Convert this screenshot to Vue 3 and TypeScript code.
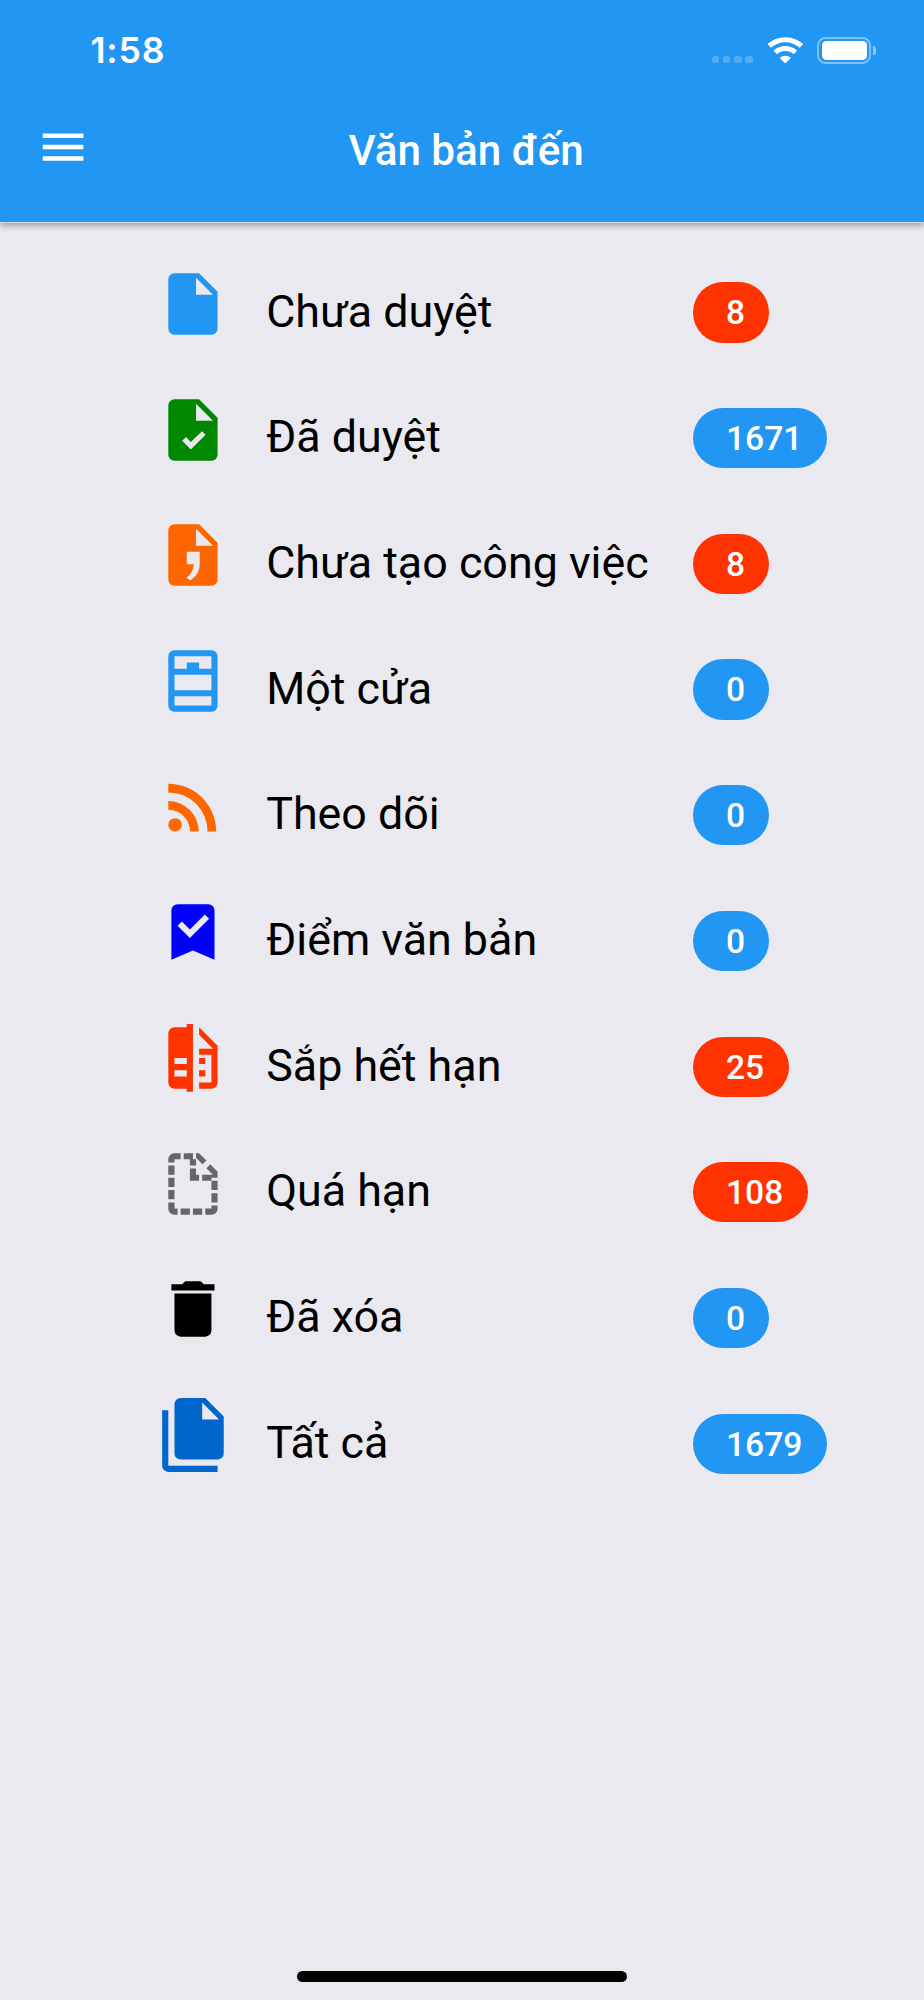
<script setup lang="ts">
interface Folder {
  label: string
  count: number
  tone: 'info' | 'alert'
  color: string
  icon: string
}

const folders: Folder[] = [
  {
    label: 'Chưa duyệt', count: 8, tone: 'alert', color: '#2196f3',
    icon: 'M13 9V3.5L18.5 9M6 2a2 2 0 0 0-2 2v16a2 2 0 0 0 2 2h12a2 2 0 0 0 2-2V8l-6-6H6z',
  },
  {
    label: 'Đã duyệt', count: 1671, tone: 'info', color: '#008800',
    icon: 'M14 2H6a2 2 0 0 0-2 2v16a2 2 0 0 0 2 2h12a2 2 0 0 0 2-2V8l-6-6M11.3 18.35l-2.8-2.8 1.25-1.25 1.55 1.6 3.65-3.5 1.15 1.15-4.8 4.8M13 9V3.5L18.5 9H13z',
  },
  {
    label: 'Chưa tạo công việc', count: 8, tone: 'alert', color: '#ff6600',
    icon: 'M14 2H6a2 2 0 0 0-2 2v16a2 2 0 0 0 2 2h12a2 2 0 0 0 2-2V8l-6-6M10 11h4.2v3.8c0 2.5-1.1 4.4-3.1 5.4l-1.2-.8c1.4-1 2.2-2.4 2.4-4.4H10v-4M13 9V3.5L18.5 9H13z',
  },
  {
    label: 'Một cửa', count: 0, tone: 'info', color: '#2196f3',
    icon: 'M6 2a2 2 0 0 0-2 2v16a2 2 0 0 0 2 2h12a2 2 0 0 0 2-2V4a2 2 0 0 0-2-2H6m0 2h12v4h-4V6h-4v2H6V4m0 6h12v5H6v-5m0 7h12v3H6v-3z',
  },
  {
    label: 'Theo dõi', count: 0, tone: 'info', color: '#ff6600',
    icon: 'M6.18 15.64a2.18 2.18 0 0 1 2.18 2.18C8.36 19 7.38 20 6.18 20C5 20 4 19 4 17.82a2.18 2.18 0 0 1 2.18-2.18M4 4.44A15.56 15.56 0 0 1 19.56 20h-2.83A12.73 12.73 0 0 0 4 7.27V4.44m0 5.66a9.9 9.9 0 0 1 9.9 9.9h-2.83A7.07 7.07 0 0 0 4 12.93V10.1z',
  },
  {
    label: 'Điểm văn bản', count: 0, tone: 'info', color: '#0000ff',
    icon: 'M17 3a2 2 0 0 1 2 2v16l-7-3-7 3V5a2 2 0 0 1 2-2h10m-6 11l6.25-6.25-1.41-1.41L11 11.17 8.41 8.59 7 10l4 4z',
  },
  {
    label: 'Sắp hết hạn', count: 25, tone: 'alert', color: '#ff3300',
    icon: 'M10 1v1H6a2 2 0 0 0-2 2v16a2 2 0 0 0 2 2h4v1h2V1h-2m4 1v2.5L18.5 9H14v2h4v9h-4v2h4a2 2 0 0 0 2-2V8l-6-6M6 12h4v2H6v-2m8 0v2h2v-2h-2m-8 4h4v2H6v-2m8 0v2h2v-2h-2z',
  },
  {
    label: 'Quá hạn', count: 108, tone: 'alert', color: '#666666',
    icon: 'M13 9h1v2h-3V7h2v2m5.5 0l-2.12-2.12 1.25-1.25L20 8v2h-2v1h-3V9h3.5M13 3.5V2h-1v2h1v2h-2V4H9V2H8v2H6v1H4V4a2 2 0 0 1 2-2h8l2.36 2.36-1.25 1.25L13 3.5M20 20a2 2 0 0 1-2 2h-2v-2h2v-1h2v1m-2-5h2v3h-2v-3m-6 7v-2h3v2h-3m-4 0v-2h3v2H8m-2 0a2 2 0 0 1-2-2v-2h2v2h1v2H6m-2-8h2v3H4v-3m0-4h2v3H4v-3m14 1h2v3h-2v-3M4 6h2v3H4V6z',
  },
  {
    label: 'Đã xóa', count: 0, tone: 'info', color: '#000000',
    icon: 'M19 4h-3.5l-.6-.7a1 1 0 0 0-.7-.3H9.8a1 1 0 0 0-.7.3l-.6.7H5v2h14M6 19a2 2 0 0 0 2 2h8a2 2 0 0 0 2-2V7H6v12z',
  },
  {
    label: 'Tất cả', count: 1679, tone: 'info', color: '#0066cc',
    icon: 'M15 7h5.5L15 1.5V7M8 0h8l6 6v12a2 2 0 0 1-2 2H8a2 2 0 0 1-2-2V2a2 2 0 0 1 2-2M4 4v18h16v2H4a2 2 0 0 1-2-2V4h2z',
  },
]
</script>

<template>
  <div class="screen">
    <header class="header">
      <div class="status">
        <span class="clock">1:58</span>
        <div class="signal"><i v-for="n in 4" :key="n" /></div>
        <svg class="wifi" viewBox="0 0 36 28" fill="none" stroke="#fff">
          <path d="M2.2 9.9A24 24 0 0 1 34.4 9.9" stroke-width="5" />
          <path d="M8.2 16.5A15.1 15.1 0 0 1 28.4 16.5" stroke-width="5" />
          <path d="M18.3 27.6L12.7 22a8 8 0 0 1 11.2 0z" fill="#fff" stroke="none" />
        </svg>
        <div class="battery"><i /></div>
        <i class="battery-tip" />
      </div>
      <div class="toolbar">
        <svg class="menu" viewBox="0 0 24 24"><path d="M3 6h18v2H3V6m0 5h18v2H3v-2m0 5h18v2H3v-2z" /></svg>
        <h1 class="title">Văn bản đến</h1>
      </div>
    </header>

    <main class="list">
      <div v-for="f in folders" :key="f.label" class="row">
        <svg class="icon" viewBox="0 0 24 24" :style="{ fill: f.color }">
          <path fill-rule="evenodd" :d="f.icon" />
        </svg>
        <span class="label">{{ f.label }}</span>
        <span class="badge" :class="f.tone">{{ f.count }}</span>
      </div>
    </main>

    <div class="home-indicator" />
  </div>
</template>

<style>
body {
  background: #e9e9ef;
}
</style>

<style scoped>
.screen {
  display: flex;
  flex-direction: column;
  box-sizing: border-box;
  width: 924px;
  height: 2000px;
  padding-bottom: 18px;
  overflow: hidden;
  background: #e9e9ef;
  font-family: Roboto, "Noto Sans", sans-serif;
}

.header {
  box-sizing: border-box;
  flex: none;
  height: 223px;
  border-bottom: 1px solid #d3d9e2;
  background: #2196f3;
  color: #fff;
  box-shadow: 0 3px 6px rgba(0, 0, 0, 0.3);
}

.status {
  display: flex;
  align-items: center;
  height: 100.8px;
  padding-left: 90.4px;
}

.clock {
  width: 621.6px;
  padding-top: 1.6px;
  font: 600 35.6px/42px Inter, sans-serif;
  letter-spacing: 0.9px;
}

.signal {
  display: flex;
  gap: 3.7px;
  padding-top: 18.6px;
}

.signal i {
  width: 7.4px;
  height: 7.4px;
  border-radius: 2.5px;
  background: rgba(255, 255, 255, 0.22);
}

.wifi {
  width: 36px;
  height: 28px;
  margin-left: 14.2px;
}

.battery {
  box-sizing: border-box;
  width: 53.5px;
  height: 27.4px;
  margin-left: 14.5px;
  padding: 2.3px;
  border: 2px solid rgba(255, 255, 255, 0.42);
  border-radius: 8.5px;
}

.battery i {
  display: block;
  height: 100%;
  border-radius: 4.5px;
  background: #fff;
}

.battery-tip {
  width: 3.4px;
  height: 9px;
  margin-left: 1.8px;
  border-radius: 0 4px 4px 0 / 0 4.5px 4.5px 0;
  background: rgba(255, 255, 255, 0.48);
}

.toolbar {
  display: flex;
  align-items: flex-start;
  padding: 18.8px 0 0 35.8px;
}

.menu {
  width: 54.2px;
  height: 54.2px;
  fill: #fff;
}

.title {
  margin: 6px 0 0 258.4px;
  font-size: 42.2px;
  font-weight: 500;
  line-height: 50px;
  white-space: nowrap;
}

.list {
  flex: 1;
  padding-top: 25.7px;
}

.row {
  display: flex;
  align-items: center;
  height: 125.7px;
  padding-left: 156.3px;
}

.icon {
  flex: none;
  width: 73.9px;
  height: 73.9px;
  margin-bottom: 15.2px;
}

.label {
  width: 427px;
  margin-left: 36px;
  font-size: 44.8px;
  line-height: 54px;
  white-space: nowrap;
}

.badge {
  box-sizing: border-box;
  height: 60.3px;
  margin-top: 2px;
  padding: 0 24.4px 0 32.8px;
  border-radius: 30.2px;
  color: #fff;
  font-size: 33.6px;
  font-weight: 500;
  line-height: 61.6px;
}

.badge.info {
  background: #2196f3;
}

.badge.alert {
  background: #ff3300;
}

.home-indicator {
  flex: none;
  align-self: center;
  width: 330px;
  height: 11.2px;
  border-radius: 5.6px;
  background: #000;
}
</style>
